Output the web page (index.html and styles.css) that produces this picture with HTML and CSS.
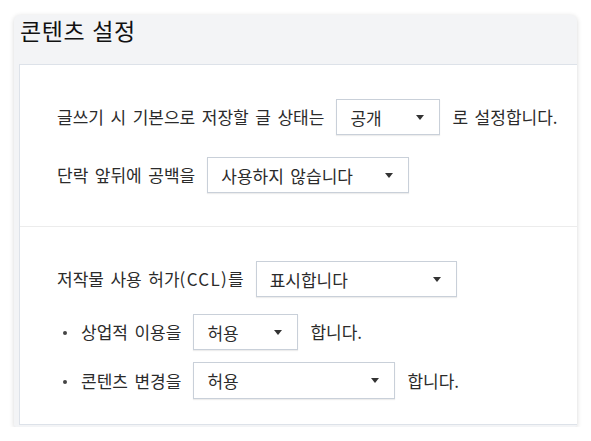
FILE: index.html
```html
<!DOCTYPE html>
<html lang="ko">
<head>
<meta charset="utf-8">
<link rel="stylesheet" href="styles.css">
</head>
<body>
<div class="card">
  <div class="card-head"><h1 class="title">콘텐츠 설정</h1></div>
  <div class="card-body">
    <section class="group group-first">
      <div class="row row-1">
        <span class="label">글쓰기 시 기본으로 저장할 글 상태는</span>
        <div class="dropdown w-104"><span>공개</span><i class="caret"></i></div>
        <span class="label">로 설정합니다.</span>
      </div>
      <div class="row row-2">
        <span class="label">단락 앞뒤에 공백을</span>
        <div class="dropdown w-202"><span>사용하지 않습니다</span><i class="caret"></i></div>
      </div>
    </section>
    <section class="group group-second">
      <div class="row row-3">
        <span class="label">저작물 사용 허가<span class="latin">(CCL)</span>를</span>
        <div class="dropdown w-201"><span>표시합니다</span><i class="caret"></i></div>
      </div>
      <div class="row row-4 bullet">
        <span class="label">상업적 이용을</span>
        <div class="dropdown w-105"><span>허용</span><i class="caret"></i></div>
        <span class="label">합니다.</span>
      </div>
      <div class="row row-5 bullet">
        <span class="label">콘텐츠 변경을</span>
        <div class="dropdown w-202 tall"><span>허용</span><i class="caret"></i></div>
        <span class="label">합니다.</span>
      </div>
    </section>
  </div>
</div>
</body>
</html>
```

FILE: styles.css
```css
* { box-sizing: border-box; }
html, body { margin: 0; padding: 0; background: #ffffff; }
body {
  padding: 15px 14px 0 14px;
  font-family: "Noto Sans CJK KR", "Noto Sans", sans-serif;
  color: #2b2b2b;
}
.card {
  width: 563px;
  height: 412px;
  background: #f3f4f6;
  border-radius: 6px 6px 2px 2px;
  box-shadow: 0 1px 5px rgba(0, 0, 0, 0.16);
  display: flex;
  flex-direction: column;
}
.card-head {
  height: 49px;
  padding-left: 6px;
}
.title {
  margin: 0;
  font-size: 23px;
  font-weight: 400;
  line-height: 30px;
  color: #111111;
  letter-spacing: 0.6px;
}
.card-body {
  margin-left: 5px;
  height: 361px;
  background: #ffffff;
  border: 1px solid #dde2e9;
  border-right: none;
}
.group { padding-left: 37px; }
.group-first {
  height: 162px;
  padding-top: 34px;
  border-bottom: 1px solid #ececec;
}
.group-second { padding-top: 34px; }
.row {
  display: flex;
  align-items: center;
  gap: 12px;
  font-size: 17px;
  word-spacing: 1.8px;
}
.row-2 { margin-top: 22px; }
.row-4 { margin-top: 17px; }
.row-5 { margin-top: 12px; }
.label { white-space: nowrap; line-height: 20px; }
.latin { letter-spacing: 1.3px; }
.bullet { padding-left: 24px; position: relative; }
.bullet::before {
  content: "";
  position: absolute;
  left: 6px;
  top: 50%;
  width: 4px;
  height: 4px;
  margin-top: -1px;
  border-radius: 50%;
  background: #444444;
}
.dropdown {
  height: 36px;
  border: 1px solid #c9d0d9;
  box-shadow: 0 1px 1px rgba(0, 0, 0, 0.07);
  background: #ffffff;
  display: flex;
  align-items: center;
  justify-content: space-between;
  padding: 0 15px 0 13px;
  white-space: nowrap;
}
.dropdown.tall { height: 37px; }
.caret {
  width: 0;
  height: 0;
  border-left: 4px solid transparent;
  border-right: 4px solid transparent;
  border-top: 5px solid #333333;
}
.w-104 { width: 104px; }
.w-105 { width: 105px; }
.w-201 { width: 201px; }
.w-202 { width: 202px; }
```
